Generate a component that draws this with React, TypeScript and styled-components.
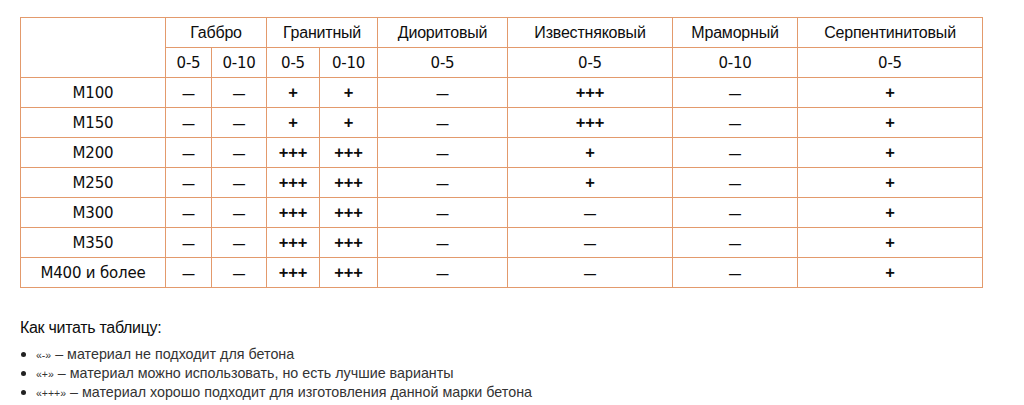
import React from "react";
import styled, { createGlobalStyle } from "styled-components";

const GlobalStyle = createGlobalStyle`
  body {
    margin: 0;
    background: #fff;
    font-family: "Liberation Sans", Arial, sans-serif;
  }
`;

const Page = styled.div`
  padding: 17px 20px 0 20px;
`;

const Table = styled.table`
  border-collapse: collapse;
  table-layout: fixed;
  width: 963px;
`;

const Cell = styled.td<{ $head?: boolean }>`
  border: 1px solid #e39a6c;
  height: 29px;
  padding: 0;
  text-align: center;
  vertical-align: middle;
  color: #0d0d0d;
  font-family: ${({ $head }) =>
    $head ? '"Liberation Sans", Arial, sans-serif' : '"DejaVu Sans", Verdana, sans-serif'};
  font-size: ${({ $head }) => ($head ? "16px" : "15px")};
  letter-spacing: -0.2px;
`;

const Mark = styled.span<{ $dash?: boolean }>`
  font-family: "Liberation Sans", Arial, sans-serif;
  font-weight: bold;
  font-size: ${({ $dash }) => ($dash ? "12px" : "16.5px")};
  color: #0d0d0d;
`;

const Title = styled.h3`
  margin: 30px 0 0 0;
  font-size: 16px;
  line-height: 20px;
  font-weight: normal;
  color: #0d0d0d;
  letter-spacing: -0.3px;
`;

const Legend = styled.ul`
  list-style: none;
  margin: 7px 0 0 0;
  padding: 0;
`;

const LegendItem = styled.li`
  position: relative;
  padding-left: 16px;
  font-size: 14.3px;
  line-height: 18px;
  color: #333;

  &::before {
    content: "";
    position: absolute;
    left: 1px;
    top: 7px;
    width: 5px;
    height: 5px;
    border-radius: 50%;
    background: #222;
  }
`;

const Quote = styled.span`
  font-size: 10.5px;
`;

const widths = [145, 46, 55, 53, 58, 130, 165, 125, 185];

const rows: [string, string[]][] = [
  ["М100", ["-", "-", "+", "+", "-", "+++", "-", "+"]],
  ["М150", ["-", "-", "+", "+", "-", "+++", "-", "+"]],
  ["М200", ["-", "-", "+++", "+++", "-", "+", "-", "+"]],
  ["М250", ["-", "-", "+++", "+++", "-", "+", "-", "+"]],
  ["М300", ["-", "-", "+++", "+++", "-", "-", "-", "+"]],
  ["М350", ["-", "-", "+++", "+++", "-", "-", "-", "+"]],
  ["М400 и более", ["-", "-", "+++", "+++", "-", "-", "-", "+"]],
];

const renderMark = (v: string) =>
  v === "-" ? <Mark $dash>—</Mark> : <Mark>{v}</Mark>;

export default function App() {
  return (
    <>
      <GlobalStyle />
      <Page>
        <Table>
          <colgroup>
            {widths.map((w, i) => (
              <col key={i} style={{ width: w }} />
            ))}
          </colgroup>
          <tbody>
            <tr>
              <Cell $head rowSpan={2} />
              <Cell $head colSpan={2}>Габбро</Cell>
              <Cell $head colSpan={2}>Гранитный</Cell>
              <Cell $head>Диоритовый</Cell>
              <Cell $head>Известняковый</Cell>
              <Cell $head>Мраморный</Cell>
              <Cell $head>Серпентинитовый</Cell>
            </tr>
            <tr>
              <Cell>0-5</Cell>
              <Cell>0-10</Cell>
              <Cell>0-5</Cell>
              <Cell>0-10</Cell>
              <Cell>0-5</Cell>
              <Cell>0-5</Cell>
              <Cell>0-10</Cell>
              <Cell>0-5</Cell>
            </tr>
            {rows.map(([grade, vals]) => (
              <tr key={grade}>
                <Cell>{grade}</Cell>
                {vals.map((v, i) => (
                  <Cell key={i}>{renderMark(v)}</Cell>
                ))}
              </tr>
            ))}
          </tbody>
        </Table>
        <Title>Как читать таблицу:</Title>
        <Legend>
          <LegendItem>
            <Quote>«-»</Quote> – материал не подходит для бетона
          </LegendItem>
          <LegendItem>
            <Quote>«+»</Quote> – материал можно использовать, но есть лучшие варианты
          </LegendItem>
          <LegendItem>
            <Quote>«+++»</Quote> – материал хорошо подходит для изготовления данной марки бетона
          </LegendItem>
        </Legend>
      </Page>
    </>
  );
}
